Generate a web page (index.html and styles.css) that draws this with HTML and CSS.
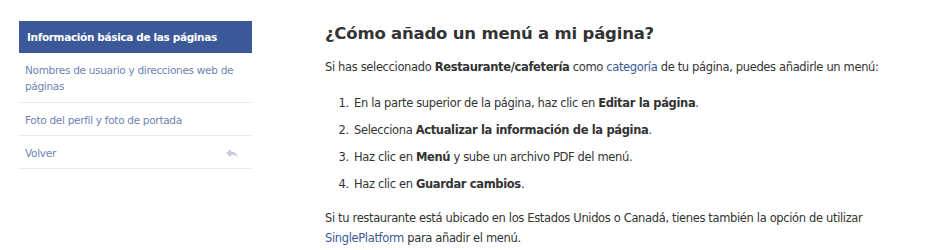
FILE: index.html
```html
<!DOCTYPE html>
<html lang="es">
<head>
<meta charset="utf-8">
<link rel="stylesheet" href="styles.css">
</head>
<body>
<div class="page">
  <nav class="sidebar">
    <div class="nav-active">Información básica de las páginas</div>
    <a class="nav-item nav-first" href="#">Nombres de usuario y direcciones web de páginas</a>
    <a class="nav-item" href="#">Foto del perfil y foto de portada</a>
    <a class="nav-item nav-back" href="#"><span>Volver</span>
      <svg class="back-icon" width="12" height="9" viewBox="0 0 12 9"><path d="M0 4 L5 0 L5 2.5 C8.5 2.5 11 4.5 12 8.5 C10.5 6.5 8.5 5.5 5 5.5 L5 8 Z" fill="#c4ccdb"/></svg>
    </a>
  </nav>
  <main class="content">
    <h1 class="title">¿Cómo añado un menú a mi página?</h1>
    <p class="para">Si has seleccionado <b>Restaurante/cafetería</b> como <a href="#">categoría</a> de tu página, puedes añadirle un menú:</p>
    <ol class="steps">
      <li>En la parte superior de la página, haz clic en <b>Editar la página</b>.</li>
      <li>Selecciona <b>Actualizar la información de la página</b>.</li>
      <li>Haz clic en <b>Menú</b> y sube un archivo PDF del menú.</li>
      <li>Haz clic en <b>Guardar cambios</b>.</li>
    </ol>
    <p class="para">Si tu restaurante está ubicado en los Estados Unidos o Canadá, tienes también la opción de utilizar<br><a href="#">SinglePlatform</a> para añadir el menú.</p>
  </main>
</div>
</body>
</html>
```
FILE: styles.css
```css
html, body { margin: 0; padding: 0; background: #fff; }
body { font-family: "DejaVu Sans", sans-serif; font-size: 11.5px; color: #333; letter-spacing: -0.35px; }
.page { display: flex; padding: 21px 0 0 19px; }
.sidebar { width: 233px; display: flex; flex-direction: column; flex-shrink: 0; }
.nav-active { background: #3b5998; color: #fff; font-weight: bold; height: 32px; line-height: 32px; padding: 0 8px; font-size: 10.5px; letter-spacing: -0.35px; }
.nav-item { display: flex; justify-content: space-between; align-items: center; color: #6d84b4; text-decoration: none; padding: 9px 8px 7px 6px; line-height: 16px; border-bottom: 1px solid #e9eaed; font-size: 10.5px; letter-spacing: -0.3px; }
.nav-first { padding-bottom: 8px; }
.back-icon { margin-right: 6px; }
.content { margin-left: 73px; width: 600px; }
.title { font-size: 16.5px; font-weight: bold; color: #333; margin: 2px 0 12px; line-height: 22px; letter-spacing: -0.2px; }
.para { margin: 0; line-height: 20px; }
.para a { color: #3b5998; text-decoration: none; }
.steps { margin: 16px 0 14px; padding-left: 27px; }
.steps li { line-height: 20px; margin-bottom: 7px; padding-left: 2px; }
```
